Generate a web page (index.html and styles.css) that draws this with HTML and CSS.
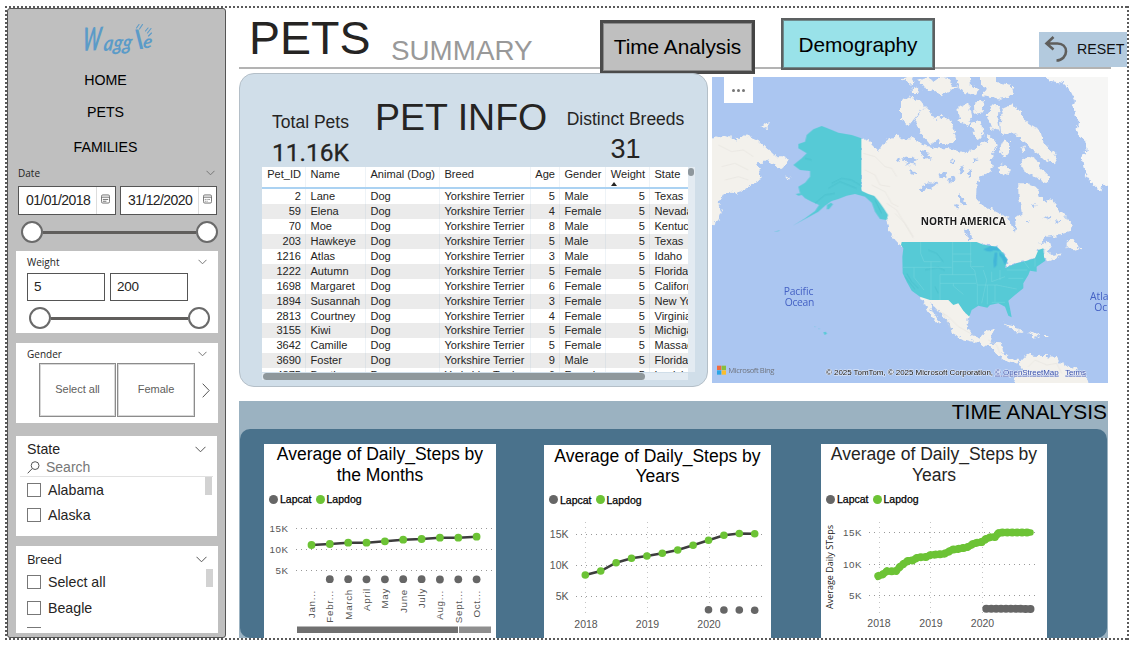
FILE: index.html
```html
<!DOCTYPE html>
<html lang="en">
<head>
<meta charset="utf-8">
<title>Pets summary</title>
<link rel="stylesheet" href="styles.css">
</head>
<body>
<div class="report">
  <aside class="sidebar">
    <svg class="logo" width="76" height="40" viewBox="0 0 76 40">
      <g class="logo-word">
        <text transform="translate(1 29) rotate(-3) skewX(-8) scale(.68 1.15)" font-size="28">W</text>
        <text transform="translate(22 29) rotate(-3) skewX(-10) scale(.95 1.1)" font-size="19.500">agg</text>
        <text transform="translate(58.500 27) skewX(20) scale(1 1.050)" font-size="25">l</text>
        <text transform="translate(61.500 26) skewX(-8)" font-size="18.500">e</text>
      </g>
      <g fill="none" stroke="#5b9bc8" stroke-width="1.100" stroke-linecap="round">
        <path d="M55.500 6l2.500-3.500M58.500 7l3-4.500M64.500 9l2.500-3M66.500 11l3.500-4.500M67.500 14l3-3"/>
      </g>
    </svg>
    <nav class="menu">
      <a class="menu-item">HOME</a>
      <a class="menu-item">PETS</a>
      <a class="menu-item">FAMILIES</a>
    </nav>

    <section class="date">
      <div class="label-row"><span class="small-label">Date</span>
        <svg width="9" height="6" viewBox="0 0 9 6"><path class="chev" d="M.5 .8l4 4 4-4"/></svg></div>
      <div class="date-fields">
        <div class="date-box"><span>01/01/2018</span><i><svg width="9" height="10" viewBox="0 0 10 10"><path class="cal" d="M.5 2q0-1.500 1.500-1.500h6q1.500 0 1.500 1.500v6q0 1.500-1.500 1.500h-6q-1.500 0-1.500-1.500zM.5 3h9M2 5.500h6M2 7.500h4"/></svg></i></div>
        <div class="date-box"><span>31/12/2020</span><i><svg width="9" height="10" viewBox="0 0 10 10"><path class="cal" d="M.5 2q0-1.500 1.500-1.500h6q1.500 0 1.500 1.500v6q0 1.500-1.500 1.500h-6q-1.500 0-1.500-1.500zM.5 3h9M2 5.500h1m1 0h1m1 0h1.500M2 7.500h1m1 0h1"/></svg></i></div>
      </div>
      <div class="slider"><b></b><s></s><b></b></div>
    </section>

    <section class="card weight">
      <div class="label-row"><span class="small-label">Weight</span>
        <svg width="9" height="6" viewBox="0 0 9 6"><path class="chev" d="M.5 .8l4 4 4-4"/></svg></div>
      <div class="num-fields"><div class="num-box">5</div><div class="num-box">200</div></div>
      <div class="slider"><b></b><s></s><b></b></div>
    </section>

    <section class="card gender">
      <div class="label-row"><span class="small-label">Gender</span>
        <svg width="9" height="6" viewBox="0 0 9 6"><path class="chev" d="M.5 .8l4 4 4-4"/></svg></div>
      <div class="tiles"><div class="tile">Select all</div><div class="tile">Female</div>
        <svg class="next" width="8" height="15" viewBox="0 0 8 15"><path class="chev dark" d="M.7 .7l6.500 6.800-6.500 6.800"/></svg></div>
    </section>

    <section class="card state">
      <div class="label-row big"><span>State</span>
        <svg width="11" height="7" viewBox="0 0 11 7"><path class="chev dark" d="M.5 .8l5 5 5-5"/></svg></div>
      <div class="search"><svg width="13" height="13" viewBox="0 0 13 13"><path class="chev dark" d="M.7 12.300l4.400-4.600M12 4.600a3.900 3.900 0 1 1-7.800 0a3.900 3.900 0 1 1 7.800 0"/></svg><span>Search</span></div>
      <div class="list"><div><div class="opt"><u></u>Alabama</div><div class="opt">
        <u></u>Alaska</div></div><em></em></div>
    </section>

    <section class="card breed">
      <div class="label-row big"><span class="segoe">Breed</span>
        <svg width="11" height="7" viewBox="0 0 11 7"><path class="chev dark" d="M.5 .8l5 5 5-5"/></svg></div>
      <div class="list"><div><div class="opt"><u></u>Select all</div><div class="opt"><u></u>Beagle</div><div class="opt"><u></u>Bernedoodle</div></div><em></em></div>
    </section>
  </aside>

  <main class="content">
    <header class="header">
      <h1 class="title">PETS</h1>
      <span class="subtitle">SUMMARY</span>
      <a class="tab tab-time">Time Analysis</a>
      <a class="tab tab-demo">Demography</a>
      <a class="reset"><svg width="25" height="28" viewBox="0 0 25 28"><path fill="none" stroke="#5f5e5c" stroke-width="2.600" d="M9.500 2L2.500 8.500l7 6M3 8.500h10.500c5 0 8.500 3.200 8.500 8s-4 9-9.500 9"/></svg><span>RESET</span></a>
    </header>

    <div class="row">
      <section class="info">
        <div class="stats">
          <div class="stat left"><span class="stat-label">Total Pets</span><span class="stat-value din">11.16K</span></div>
          <h2 class="info-title">PET INFO</h2>
          <div class="stat right"><span class="stat-label">Distinct Breeds</span><span class="stat-value">31</span></div>
        </div>
        <div class="table-wrap">
          <div class="table">
            <div class="tr th"><span>Pet_ID</span><span>Name</span><span>Animal (Dog)</span><span>Breed</span><span>Age</span><span>Gender</span><span class="sorted">Weight</span><span>State</span></div>
            <div class="tr"><span>2</span><span>Lane</span><span>Dog</span><span>Yorkshire Terrier</span><span>5</span><span>Male</span><span>5</span><span>Texas</span></div>
            <div class="tr"><span>59</span><span>Elena</span><span>Dog</span><span>Yorkshire Terrier</span><span>4</span><span>Female</span><span>5</span><span>Nevada</span></div>
            <div class="tr"><span>70</span><span>Moe</span><span>Dog</span><span>Yorkshire Terrier</span><span>8</span><span>Male</span><span>5</span><span>Kentucky</span></div>
            <div class="tr"><span>203</span><span>Hawkeye</span><span>Dog</span><span>Yorkshire Terrier</span><span>5</span><span>Male</span><span>5</span><span>Texas</span></div>
            <div class="tr"><span>1216</span><span>Atlas</span><span>Dog</span><span>Yorkshire Terrier</span><span>3</span><span>Male</span><span>5</span><span>Idaho</span></div>
            <div class="tr"><span>1222</span><span>Autumn</span><span>Dog</span><span>Yorkshire Terrier</span><span>5</span><span>Female</span><span>5</span><span>Florida</span></div>
            <div class="tr"><span>1698</span><span>Margaret</span><span>Dog</span><span>Yorkshire Terrier</span><span>6</span><span>Female</span><span>5</span><span>California</span></div>
            <div class="tr"><span>1894</span><span>Susannah</span><span>Dog</span><span>Yorkshire Terrier</span><span>3</span><span>Female</span><span>5</span><span>New York</span></div>
            <div class="tr"><span>2813</span><span>Courtney</span><span>Dog</span><span>Yorkshire Terrier</span><span>4</span><span>Female</span><span>5</span><span>Virginia</span></div>
            <div class="tr"><span>3155</span><span>Kiwi</span><span>Dog</span><span>Yorkshire Terrier</span><span>5</span><span>Female</span><span>5</span><span>Michigan</span></div>
            <div class="tr"><span>3642</span><span>Camille</span><span>Dog</span><span>Yorkshire Terrier</span><span>5</span><span>Female</span><span>5</span><span>Massachusetts</span></div>
            <div class="tr"><span>3690</span><span>Foster</span><span>Dog</span><span>Yorkshire Terrier</span><span>9</span><span>Male</span><span>5</span><span>Florida</span></div>
            <div class="tr"><span>4375</span><span>Bentley</span><span>Dog</span><span>Yorkshire Terrier</span><span>6</span><span>Female</span><span>5</span><span>Louisiana</span></div>
          </div>
          <div class="vbar"><i></i></div>
          <div class="hbar"><i></i></div>
        </div>
      </section>

      <section class="map">
        <svg width="396" height="306" viewBox="21 21 1188 918">
          <defs>
            <filter id="coast" x="-5%" y="-5%" width="110%" height="110%"><feTurbulence type="fractalNoise" baseFrequency=".07" numOctaves="4" seed="4"/><feDisplacementMap in="SourceGraphic" scale="20" xChannelSelector="R" yChannelSelector="G"/></filter>
            <filter id="edge" x="-5%" y="-5%" width="110%" height="110%"><feTurbulence type="fractalNoise" baseFrequency=".2" numOctaves="2" seed="9"/><feDisplacementMap in="SourceGraphic" scale="3" xChannelSelector="R" yChannelSelector="G"/></filter>
          </defs>
          <rect x="21" y="21" width="1188" height="918" fill="#abc6f1"/>
          <g filter="url(#coast)">
            <g fill="#f3f1ec">
              <path d="M0 195L40 205 60 195 75 200 90 215 108 195 130 198 160 210 185 235 215 262 235 262 250 270 240 285 225 297 205 285 190 265 175 278 150 280 165 300 170 325 150 335 130 350 105 368 80 365 55 375 40 400 50 425 40 450 22 465 0 470ZM166 168l14-9 15 6-8 9zM238 317l10 0 12 7-8 1z"/>
              <g transform="translate(585 0)">
                <path d="M-117 205L-90 215 -65 242 -50 220 -25 205 -12 195 5 205 40 205 70 225 110 235 145 235 165 240 190 250 215 240 240 225 262 215 265 195 282 210 290 225 282 250 268 270 282 292 262 310 240 320 230 345 228 385 245 405 270 415 300 430 325 440 335 465 345 488 352 465 345 445 365 430 360 400 355 370 355 340 385 340 410 350 420 380 440 395 450 380 465 405 490 430 515 465 510 485 480 495 440 500 420 520 445 515 455 530 440 545 455 555 485 550 470 565 440 575 430 560 430 535 415 540 405 565 380 572 350 580 315 592 325 570 310 550 290 530 250 522 230 530 5 530 -10 505 -35 480 -40 450 -60 420 -75 395 -85 380 -110 370 -117 360Z"/>
                <path d="M500 515L515 503 525 520 542 536 525 542 500 532ZM-12 500l-15-8 20 28 10 0z"/>
                <path fill="#f6f6f5" d="M415 0L660 0 660 340 610 345 600 362 580 345 560 320 550 290 545 260 560 240 555 210 540 200 530 180 535 150 520 120 525 90 510 60 490 40 450 32Z"/>
                <path d="M310 115L335 105 360 120 372 150 395 165 420 180 430 215 455 240 470 262 460 280 435 270 415 250 395 235 370 215 345 190 320 195 303 188 300 150ZM280 103L300 110 295 150 300 182 275 178 260 135Z"/>
                <path d="M365 295L362 275 385 258 405 262 420 290 450 320 447 337 415 328 385 308ZM293 290l18-6 22 15-8 16-23-4zM313 203l14 12 0 30-15 18-14-22zM358 235l14-7 7 14-12 10z"/>
                <path d="M45 150L75 108 90 123 105 147 120 137 130 147 147 143 157 165 163 190 170 215 130 224 115 208 90 226 65 197ZM3 95L25 82 60 92 73 110 45 143 25 168 3 147Z"/>
                <path d="M172 108L207 98 217 140 200 168 176 150ZM222 98L255 90 248 127 223 132ZM212 158L242 153 250 197 223 208Z"/>
                <path d="M52 28L80 20 100 34 118 20 150 24 148 42 175 50 145 63 120 76 107 60 82 64ZM163 10L208 10 213 45 238 55 228 76 193 68 176 45ZM240 10L290 10 288 36 334 45 343 77 300 86 248 75 262 52 240 45ZM8 25l24-10 12 21-18 6zM38 48l18 12 0 12-17 0z"/>
                <path d="M60 675L90 683 145 683 160 698 175 693 190 715 205 738 200 765 215 795 240 805 255 780 285 775 275 800 272 818 305 820 310 850 330 868 355 870 345 882 320 875 290 850 270 830 230 818 190 808 155 790 150 765 130 740 105 712 90 700 97 722 118 757 108 757 85 725Z"/>
                <path d="M310 758L340 766 372 787 340 783ZM385 786L420 796 400 803ZM435 798l10 0 0 3-10 0zM355 876L380 850 400 857 430 858 470 860 480 880 520 895 555 920 580 959 335 959 345 915 370 900Z"/>
              </g>
            </g>
            <g transform="translate(585 0)" fill="#abc6f1">
              <path d="M10 265l25-5 20 8-15 8 12 8-22-2-16 8 8-10zM70 345l20-8 25 2-12 12-28 12-18 0zM180 375l12 12 6 20-10 2-8-18zM195 475l14 10 10 22-12 0-10-16z"/>
              <path d="M60 240l30 5-10 12 18 8-25 4zM115 315l20-6 8 14-20 2zM140 330l25-10 4 6-18 12zM180 290l12-4-4 22-12 6zM205 300l10-5-4 22-8 4zM220 265l14 2-8 15zM160 400l18 5-4 14zM150 270l14 4-4 10zM375 450l14 0-4 10zM430 445l22-8-4 14zM465 450l14 4-8 8zM395 400l14 4-10 8zM30 300l20 8-12 6zM-10 265l12 4-10 8z"/>
            </g>
          </g>
          <g fill="none" stroke="#dddad4" stroke-width="1.500" opacity=".7">
            <path d="M475 250l35 10 30 30 20 5 15 25M480 300l30 15 15 30 30 5M500 345l40 20 20 35 20 10M545 400l30 20 30 50 20 30M570 430l30 30 25 45M40 225l40 20 35-5 30 20M50 290l40-10 40 20M60 330l40-10 30 10M690 715l40 25 30 30 45 25M715 730l25 50M850 810l25 15 10 25M970 890l20-20 35 15 30-5 15 30M1000 920l30-15 20 20"/>
          </g>
          <g filter="url(#edge)" fill="#57cad6">
            <path d="M350 168L375 178 400 188 440 195 469 205 469 362 490 372 508 378 520 392 535 413 549 435 545 450 525 447 510 425 500 398 480 380 450 372 425 377 400 387 380 393 360 407 340 425 310 442 285 455 262 468 300 445 330 423 342 405 320 395 300 385 285 370 280 350 300 338 315 320 315 303 285 300 265 285 290 265 305 250 280 235 280 222 300 215 305 195 325 178ZM366 405l12-7 6 5-12 15-7 0zM272 372l12-2 6 5-10 2zM205 485l20-4-4 3z"/>
            <path d="M355 787l7-2 4 6-7 4zM328 769l4 1-2 2zM340 775l5 2-3 1z"/>
            <path transform="translate(585 0)" d="M5 516L230 516 250 524 290 530 310 550 322 570 315 594 350 580 380 572 405 565 415 540 430 535 432 560 436 572 410 590 410 605 390 602 385 615 370 640 370 655 345 675 325 692 330 715 335 742 325 737 315 710 295 700 270 705 262 713 235 707 215 720 208 740 190 722 175 700 160 705 145 690 90 690 60 680 35 662 20 635 8 610 7 560 10 535 3 525Z"/>
          </g>
          <g transform="translate(585 0)" fill="#42b6d8"><path d="M250 538l20-9 20 2 12 12-20-2-10 4-12-2zM284 548l8 0-2 38-8 8-2-20zM298 546l14 10 10 16-8 12-8-18-8-10z"/></g>
          <g fill="none" stroke="#42b7c5" stroke-width="3" opacity=".45"><path d="M380 340l30-15 30 5 25 15M370 355l35-20 50 20M330 400l30-25 30-5M300 265l20 5M510 390l20 40M605 610l15 25 20 20M600 620l30 38M670 540l25 10 20 25M660 600l40-8 20 10M690 650l10 20"/></g>
          <g transform="translate(585 0)" fill="none" stroke="#79d6df" stroke-width="1.500"><path d="M62 516v34l10 25h50M8 592h85M42 592v30l30 38M93 575v115M93 592h62M158 516v36h56M158 552v62M158 575h58M120 614h105M120 614v76M120 640h108M160 640v8l30 25M212 516v75l12 10 8 45v58M214 590h38M232 645h60M250 600l10 30-15 70M262 645v58M285 645v50M275 605v30l40-15M300 600v30M325 625h45M290 645l60 12M275 697h40M320 600h62M372 575l15 20M405 565v25"/></g>
          <g class="map-text">
            <text class="continent" x="647" y="466" textLength="255" lengthAdjust="spacingAndGlyphs">NORTH AMERICA</text>
            <text class="ocean" x="236" y="674" textLength="89">Pacific</text>
            <text class="ocean" x="239" y="709" textLength="89">Ocean</text>
            <text class="ocean" x="1155" y="690">Atla</text>
            <text class="ocean" x="1168" y="724">Oc</text>
            <path fill="#f06a3e" d="M36 887h13v13h-13z"/><path fill="#88bf3c" d="M50 887h13v13h-13z"/><path fill="#2aa5e6" d="M36 901h13v13h-13z"/><path fill="#fbbd2b" d="M50 901h13v13h-13z"/>
            <text class="bing" x="70" y="910" textLength="138">Microsoft Bing</text>
            <text class="credit" x="363" y="914" textLength="501">© 2025 TomTom, © 2025 Microsoft Corporation,</text>
            <text class="credit link" x="870" y="914" textLength="191">© OpenStreetMap</text>
            <text class="credit link" x="1081" y="914" textLength="62">Terms</text>
          </g>
        </svg>
        <div class="more"><i></i><i></i><i></i></div>
      </section>
    </div>

    <section class="analysis">
      <h3 class="analysis-title">TIME ANALYSIS</h3>
      <div class="charts">
        <article class="chart c1">
          <h4>Average of Daily_Steps by the Months</h4>
          <div class="legend"><i class="cat"></i>Lapcat<i class="dog"></i>Lapdog</div>
          <svg width="232" height="126" viewBox="264 512 232 126">
            <path class="grid" d="M296 528.500H492M296 549.500H492M296 570.500H492"/>
            <g class="axis wide" text-anchor="end"><text x="288.500" y="532">15K</text><text x="288.500" y="553">10K</text><text x="288.500" y="574">5K</text></g>
            <polyline class="line" points="311.500,545 329.800,544 348.200,542.700 366.500,542.700 384.900,541.300 403.200,539.700 421.600,539 439.900,537.700 458.300,537.700 476.600,536.700"/>
            <g fill="#6cc335"><circle cx="311.500" cy="545" r="3.900"/><circle cx="329.800" cy="544" r="3.900"/><circle cx="348.200" cy="542.700" r="3.900"/><circle cx="366.500" cy="542.700" r="3.900"/><circle cx="384.900" cy="541.300" r="3.900"/><circle cx="403.200" cy="539.700" r="3.900"/><circle cx="421.600" cy="539" r="3.900"/><circle cx="439.900" cy="537.700" r="3.900"/><circle cx="458.300" cy="537.700" r="3.900"/><circle cx="476.600" cy="536.700" r="3.900"/></g>
            <g fill="#666"><circle cx="329.800" cy="579.200" r="3.900"/><circle cx="348.200" cy="579.200" r="3.900"/><circle cx="366.500" cy="579.300" r="3.900"/><circle cx="384.900" cy="579.300" r="3.900"/><circle cx="403.200" cy="579.200" r="3.900"/><circle cx="421.600" cy="579.200" r="3.900"/><circle cx="439.900" cy="579.500" r="3.900"/><circle cx="458.300" cy="579.300" r="3.900"/><circle cx="476.600" cy="579.300" r="3.900"/></g>
            <g class="axis wide month" text-anchor="end">
              <text transform="translate(315 590) rotate(-90)">Jan...</text><text transform="translate(333.300 590) rotate(-90)">Febr...</text><text transform="translate(351.700 589) rotate(-90)">March</text><text transform="translate(370 588) rotate(-90)">April</text><text transform="translate(388.400 588) rotate(-90)">May</text><text transform="translate(406.700 589) rotate(-90)">June</text><text transform="translate(425.100 588) rotate(-90)">July</text><text transform="translate(443.400 590) rotate(-90)">Aug...</text><text transform="translate(461.800 590) rotate(-90)">Sept...</text><text transform="translate(480.100 590) rotate(-90)">Oct...</text>
            </g>
            <path fill="#707070" d="M297 626.500h161v6.500h-161z"/><path fill="#8f8f8f" d="M459 626.500h32v6.500h-32z"/>
          </svg>
        </article>
        <article class="chart c2">
          <h4>Average of Daily_Steps by Years</h4>
          <div class="legend"><i class="cat"></i>Lapcat<i class="dog"></i>Lapdog</div>
          <svg width="227" height="125" viewBox="544 513 227 125">
            <path class="grid" d="M576 534.500H762M576 565.500H762M576 596.500H762"/><path class="grid v" d="M585.500 522V616M647.500 522V616M709.500 522V616"/>
            <g class="axis" text-anchor="end"><text x="568.500" y="538">15K</text><text x="568.500" y="569">10K</text><text x="568.500" y="600">5K</text></g>
            <g class="axis" text-anchor="middle"><text x="586" y="628">2018</text><text x="647.500" y="628">2019</text><text x="709" y="628">2020</text></g>
            <polyline class="line" points="585.300,575 600.700,571 616.100,562.700 631.500,558.300 646.900,556 662.300,553.300 677.700,550 693.100,545.300 708.500,540.300 723.900,535.300 739.300,533.500 754.700,533.700"/>
            <g fill="#6cc335"><circle cx="585.300" cy="575" r="3.800"/><circle cx="600.700" cy="571" r="3.800"/><circle cx="616.100" cy="562.700" r="3.800"/><circle cx="631.500" cy="558.300" r="3.800"/><circle cx="646.900" cy="556" r="3.800"/><circle cx="662.300" cy="553.300" r="3.800"/><circle cx="677.700" cy="550" r="3.800"/><circle cx="693.100" cy="545.300" r="3.800"/><circle cx="708.500" cy="540.300" r="3.800"/><circle cx="723.900" cy="535.300" r="3.800"/><circle cx="739.300" cy="533.500" r="3.800"/><circle cx="754.700" cy="533.700" r="3.800"/></g>
            <g fill="#666"><circle cx="708.500" cy="609.700" r="3.800"/><circle cx="723.900" cy="610" r="3.800"/><circle cx="739.300" cy="610" r="3.800"/><circle cx="754.700" cy="610.200" r="3.800"/></g>
          </svg>
        </article>
        <article class="chart c3">
          <h4>Average of Daily_Steps by Years</h4>
          <div class="legend"><i class="cat"></i>Lapcat<i class="dog"></i>Lapdog</div>
          <svg width="226" height="126" viewBox="821 512 226 126">
            <path class="grid" d="M869 532.500H1038M869 564.500H1038M869 595.500H1038"/><path class="grid v" d="M879.500 522V616M930.500 522V616M982.500 522V616"/>
            <g class="axis wide" text-anchor="end"><text x="862" y="536">15K</text><text x="862" y="567.500">10K</text><text x="862" y="598.500">5K</text></g>
            <g class="axis" text-anchor="middle"><text x="879" y="627">2018</text><text x="931" y="627">2019</text><text x="982.500" y="627">2020</text></g>
            <text class="ytitle" transform="translate(833 609) rotate(-90)" textLength="84">Average Daily STeps</text>
            <polyline class="thick" stroke="#6cc335" points="878.300,576 882.700,574.300 887,571.200 895.800,571.300 900,566.700 904.300,563.300 908.700,560.300 913,560.500 917.500,557.300 926,557 930.500,555 939,554.300 943.500,554 947.800,552.300 952,549.500 956.500,549.400 961,548.200 965.300,548 969.700,546 973.700,543.300 981.700,542 986,539 990.700,537 995.300,537 999,532.500 1030.500,532.600"/>
            <polyline class="thick beads" stroke="#6cc335" points="878.300,576 882.700,574.300 887,571.200 895.800,571.300 900,566.700 904.300,563.300 908.700,560.300 913,560.500 917.500,557.300 926,557 930.500,555 939,554.300 943.500,554 947.800,552.300 952,549.500 956.500,549.400 961,548.200 965.300,548 969.700,546 973.700,543.300 981.700,542 986,539 990.700,537 995.300,537 999,532.500 1030.500,532.600"/>
            <polyline class="thick" stroke="#666" points="986.300,608.700 1030.500,608.900"/>
            <polyline class="thick beads" stroke="#666" points="986.300,608.700 1030.500,608.900"/>
          </svg>
        </article>
      </div>
    </section>
  </main>
</div>
</body>
</html>
```
FILE: styles.css
```css
* { box-sizing: border-box; }
body { margin: 0; background: #fff; font-family: "Liberation Sans", Arial, sans-serif; color: #252423; overflow: hidden; }
h1, h2, h3, h4 { margin: 0; font-weight: 400; }
svg { display: block; flex: none; }

.report {
  display: flex; width: 1124px; height: 634px; margin: 6px 0 0 5px; padding: 2px;
  background:
    repeating-linear-gradient(90deg, #5a5a5a 0 2px, transparent 2px 4px) 0 0 / 100% 2px no-repeat,
    repeating-linear-gradient(90deg, #5a5a5a 0 2px, transparent 2px 4px) 0 100% / 100% 2px no-repeat,
    repeating-linear-gradient(#5a5a5a 0 2px, transparent 2px 4px) 0 0 / 2px 100% no-repeat,
    repeating-linear-gradient(#5a5a5a 0 2px, transparent 2px 4px) 100% 0 / 2px 100% no-repeat;
}

/* sidebar */
.sidebar { width: 219px; height: 630px; background: #bfbfbf; border: 1px solid #555; border-radius: 3px; padding: 13px 8px 0; flex: none; }
.logo { margin: 0 0 0 65px; overflow: visible; }
.logo-word { font-family: Lato, sans-serif; font-style: italic; font-weight: 700; fill: #5b9bc8; }
.menu { display: flex; flex-direction: column; align-items: center; margin-left: -22px; font-size: 14.200px; color: #000; }
.menu-item { line-height: 20px; margin-top: 8px; }
.menu-item + .menu-item { margin-top: 12px; }
.menu-item + .menu-item + .menu-item { margin-top: 15px; }

.label-row { display: flex; justify-content: space-between; align-items: center; height: 14px; }
.small-label { font: 10px/14px "Open Sans", sans-serif; color: #252423; }
.chev { fill: none; stroke: #777; stroke-width: 1; }
.chev.dark { stroke: #555; }
.cal { fill: none; stroke: #666; stroke-width: 1; }

.date { padding: 9px 0 0 2px; }
.date .label-row { padding-right: 2px; }
.date-fields { display: flex; gap: 4px; margin: 6px -1px 0 0; }
.date-box { display: flex; width: 98px; height: 29px; background: #fff; border: 1px solid #555; line-height: 26px; color: #252423; }
.date-box:last-child { width: 97px; }
.date-box span { width: 78px; padding-left: 7px; border-right: 1px solid #ddd; font-size: 14px; letter-spacing: -.6px; }
.date-box i { padding: 7px 0 0 4px; }
.slider { display: flex; align-items: center; height: 22px; }
.slider b { width: 22px; height: 22px; border: 2px solid #6a6a6a; border-radius: 50%; background: #fff; flex: none; }
.slider s { flex: 1; height: 3px; background: #605e5c; }
.date .slider { margin: 6px -1px 0 3px; }

.card { background: #fff; width: 202px; }
.weight { height: 82px; margin-top: 8px; padding: 4px 8px 0 11px; }
.weight .label-row, .gender .label-row { padding-right: 3px; }
.num-fields { display: flex; gap: 5px; }
.num-fields { margin-top: 4px; }
.num-box { width: 78px; height: 28px; border: 1px solid #555; padding-left: 6px; font-size: 13.500px; line-height: 25px; letter-spacing: -.2px; }
.weight .slider { margin: 6px -1px 0 2px; width: 181px; }
.gender { height: 80px; margin-top: 10px; padding: 4px 8px 0 11px; }
.tiles { display: flex; align-items: center; gap: 1px; margin: 2px 0 0 12px; }
.tile { width: 78px; height: 54px; border: 1px solid #8c8c8c; box-shadow: inset 0 0 0 1px #d8d8d8; text-align: center; font-size: 11px; line-height: 51px; color: #605e5c; }
.tile + .tile { width: 79px; }
.next { margin-left: 6px; }
.state { width: 201px; height: 100px; margin-top: 13px; padding: 5px 4px 0 11px; }
.label-row.big { font-size: 14.200px; height: 16px; padding-right: 7px; }
.segoe { font: 13px/16px "Open Sans", sans-serif; letter-spacing: -.3px; }
.search { display: flex; gap: 6px; height: 20px; padding-top: 1px; margin-left: -7px; padding-left: 7px; align-items: center; border-bottom: 1px solid #e1e1e1; font-size: 14px; color: #777; }
.list { display: flex; justify-content: space-between; overflow: hidden; }
.list em { width: 7px; height: 18px; margin-right: 1px; background: #d2d2d2; }
.opt { display: flex; align-items: center; gap: 7px; height: 25px; font-size: 14.200px; }
.opt u { width: 14px; height: 14px; border: 1px solid #777; }
.breed { height: 87px; margin-top: 10px; padding: 5px 4px 0 11px; }
.breed .list { height: 61px; padding-top: 2px; }
.breed .opt { height: 26px; }

/* header */
.content { margin-left: 13px; width: 888px; }
.header { display: flex; align-items: flex-start; height: 65px; background: linear-gradient(#b3b3b3, #b3b3b3) 0 59px / 872px 2px no-repeat; }
.title { margin: 5px 0 0 10px; width: 142px; font-size: 46.500px; line-height: 51px; }
.subtitle { width: 209px; margin-top: 27px; font-size: 27.800px; line-height: 32px; color: #999; }
.tab { text-align: center; color: #000; font-size: 20.800px; flex: none; }
.tab-time { width: 155px; height: 54px; margin-top: 12px; border: 3px solid #4a4a4a; border-right-color: #444; box-shadow: inset 0 0 0 1px #8a8a8a; background: #bfbfbf; line-height: 48px; }
.tab-demo { width: 154px; height: 52px; margin: 10px 0 0 26px; border: 2px solid #5c6061; box-shadow: inset 0 0 0 1px #6f8a8c; background: #99e2e9; line-height: 50px; }
.reset { display: flex; width: 88px; height: 35px; margin: 24px 0 0 104px; padding: 3px 0 0 5px; background: #b3cade; color: #111; font-size: 14.200px; line-height: 29px; }
.reset span { margin-left: 8px; }

/* pet info */
.row { display: flex; }
.info { width: 469px; height: 314px; border: 1px solid #b4bfc8; border-radius: 15px; background: #d0dee9; }
.stats { display: grid; grid-template-columns: 135px 172px 1fr; height: 93px; }
.stat { display: flex; flex-direction: column; align-items: center; }
.stat.left { padding: 38px 0 0 6px; }
.stat.right { padding: 35px 0 0 0; margin-left: -3px; }
.stat-label { font-size: 17.500px; line-height: 20px; white-space: nowrap; }
.stat-value { font-size: 27px; line-height: 40px; }
.stat-value.din { font-family: Roboto, sans-serif; font-size: 24.500px; line-height: 42px; -webkit-text-stroke: .3px #252423; }
.info-title { font-size: 37.500px; line-height: 86px; text-align: center; white-space: nowrap; }
.table-wrap { display: grid; grid-template: 205px 8px / 426px 7px; margin-left: 22px; }
.table { overflow: hidden; background: #fff; }
.tr { display: grid; grid-template-columns: 43.500px 60px 74px 91px 29px 46.500px 43.500px 60px; height: 14.940px; font-size: 11.050px; line-height: 14px; }
.tr:nth-child(odd) { background: #ebebeb; }
.tr span { padding: 0 3.500px 0 5px; border-right: 1px solid rgba(160,190,210,.18); white-space: nowrap; }
.tr span:nth-child(1), .tr span:nth-child(5), .tr span:nth-child(7) { text-align: right; padding-left: 0; }
.tr.th { background: #fff; height: 22px; border-bottom: 2px solid #abd2f2; line-height: 15px; }
.th .sorted { position: relative; }
.sorted::after { content: ""; position: absolute; left: 5px; top: 15px; border: 3.500px solid transparent; border-top: 0; border-bottom: 4px solid #252423; }
.vbar { background: #e3ebf2; }
.vbar i { display: block; width: 6px; height: 8px; margin-top: 1px; border-radius: 3px; background: #8e979d; }
.hbar { background: #e3ebf2; height: 7px; margin-top: 1px; }
.hbar i { display: block; width: 382px; height: 7px; margin-left: 1px; border-radius: 4px; background: #8f989c; }

/* map */
.map { position: relative; width: 396px; height: 306px; margin: 4px 0 0 4px; overflow: hidden; }
.more { position: absolute; left: 12px; top: 0; width: 29px; height: 26px; background: #fff; display: flex; gap: 2px; justify-content: center; align-items: center; }
.more i { width: 3px; height: 3px; border-radius: 50%; background: #777; }
.continent { font: 700 31px "Open Sans", sans-serif; fill: #1c1c1c; stroke: #fff; stroke-width: 3px; paint-order: stroke; }
.ocean { font: 31px "Open Sans", sans-serif; fill: #4461c4; }
.bing { font: 23px "Open Sans", sans-serif; fill: #70757f; }
.credit { font: 24px "Liberation Sans", sans-serif; fill: #111; stroke: #e8eefa; stroke-width: 3px; paint-order: stroke; }
.credit.link { fill: #3b50a8; text-decoration: underline; }

/* time analysis */
.analysis { width: 869px; height: 237px; margin-top: 14px; background: #9bb2c1; padding: 0 1px; }
.analysis-title { height: 28px; font-size: 20.900px; line-height: 21px; text-align: right; color: #000; }
.charts { display: flex; align-items: flex-end; height: 209px; padding-left: 24px; border-radius: 10px; background: #4a728c; }
.chart { display: flex; flex-direction: column; background: #fff; flex: none; }
.c1 { width: 232px; height: 194px; }
.c2 { width: 227px; height: 193px; margin-left: 48px; }
.c3 { width: 226px; height: 194px; margin-left: 50px; }
.chart h4 { height: 42px; padding: 0 10px; text-align: center; font-size: 17.550px; line-height: 21px; color: #000; }
.c3 h4 { color: #252423; padding: 0 8px; }
.c2 h4 { line-height: 20px; padding: 1px 8px 0; }
.legend { display: flex; align-items: center; height: 29px; padding-left: 5px; font-size: 10.500px; color: #000; -webkit-text-stroke: .25px #000; }
.legend i { width: 9px; height: 9px; border-radius: 50%; margin-right: 2px; background: #666; }
.legend i.dog { background: #6cc335; margin-left: 4px; }
.chart > svg { margin-top: auto; }
.grid { fill: none; stroke: #999; stroke-width: 1; stroke-dasharray: 1 4; }
.grid.v { stroke: #c4c4c4; }
.axis { font-size: 10.500px; fill: #555; }
.axis.wide { font-size: 9.800px; letter-spacing: .5px; }
.axis.month { letter-spacing: .7px; }
.line { fill: none; stroke: #3d3d3d; stroke-width: 2.500; }
.thick { fill: none; stroke-width: 6.500; stroke-linecap: round; stroke-linejoin: round; }
.beads { stroke-width: 8; stroke-dasharray: .1 4.800; }
.ytitle { font: 9px "Open Sans", sans-serif; fill: #222; }
```
